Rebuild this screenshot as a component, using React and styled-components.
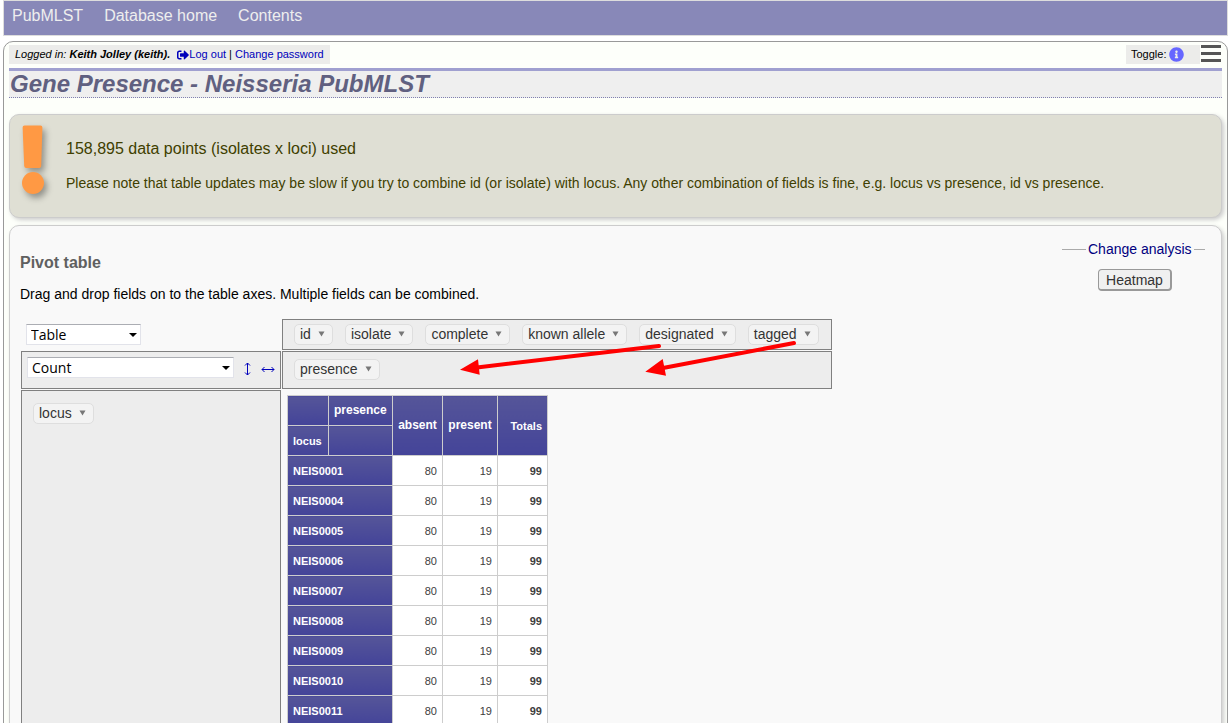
import React from "react";
import styled, { createGlobalStyle } from "styled-components";
import { FaSignOutAlt, FaInfoCircle } from "react-icons/fa";

const GlobalStyle = createGlobalStyle`
  * { box-sizing: border-box; }
  body {
    margin: 0;
    background: #fff;
    color: #000;
    font: 14px/20px "Liberation Sans", Arial, sans-serif;
  }
  a { color: #0000bb; text-decoration: none; }
`;

const Page = styled.div`
  height: 100vh;
  overflow: hidden;
  padding: 0 3px;
`;

const Nav = styled.nav`
  display: flex;
  gap: 21px;
  padding: 5px 8px 9px;
  border: 1px solid #ddd;
  background: #8888b8;
  font-size: 16px;
`;

const NavLink = styled.a`
  color: #eee;
`;

const Main = styled.main`
  margin-top: 5px;
  padding: 3px 5px;
  border: 1px solid #999;
  border-radius: 10px;
  background: #fdfffa;
`;

const TopRow = styled.div`
  display: flex;
  justify-content: space-between;
  align-items: flex-start;
  margin-bottom: 4px;
`;

const Tag = styled.div`
  display: flex;
  align-items: center;
  height: 19px;
  padding: 0 6px;
  background: #ececea;
  font-size: 11px;
  line-height: 19px;
  white-space: pre;
`;

const LogoutLink = styled.a`
  display: flex;
  align-items: center;
  margin-left: 4px;
`;

const ToggleGroup = styled.div`
  display: flex;
  gap: 1px;
`;

const ToggleTag = styled(Tag)`
  width: 74px;
  gap: 3px;
  padding: 0 5px;
`;

const IconButton = styled.button`
  display: flex;
  padding: 0;
  border: 0;
  background: none;
  color: #6666ff;
  font-size: 15px;
`;

const MenuButton = styled(IconButton)`
  flex-direction: column;
  gap: 4px;
  width: 21px;
`;

const MenuBar = styled.span`
  width: 20px;
  height: 3px;
  background: #555;
`;

const Title = styled.h1`
  margin: 0;
  padding-left: 1px;
  border-top: 3px solid #a0a0d0;
  border-bottom: 1px dotted #8080b0;
  background: #efefef;
  color: #606080;
  font-size: 24px;
  font-style: italic;
  line-height: 26px;
`;

const Box = styled.section`
  border: 1px solid #ccc;
  border-radius: 10px;
  box-shadow: 2px 2px 4px #ccc;
`;

const Notice = styled(Box)`
  display: flex;
  gap: 19px;
  min-height: 104px;
  margin-top: 16px;
  padding: 10px 11px;
  background: #dfdfd4;
  color: #404000;
`;

const WarningMark = styled.svg`
  flex: none;
  width: 26px;
  height: 74px;
  overflow: visible;
  filter: drop-shadow(3px 4px 3px rgba(0, 0, 0, 0.35));
`;

const NoticeHeading = styled.h2`
  margin: 14px 0;
  font-size: 16px;
  font-weight: normal;
`;

const Paragraph = styled.p`
  margin: 0;
`;

const Analysis = styled(Box)`
  margin-top: 7px;
  padding: 13px 16px 10px 10px;
  background: #f9f9f9;
`;

const AnalysisHead = styled.div`
  display: flex;
  justify-content: space-between;
  align-items: flex-start;
  margin-bottom: 15px;
`;

const AnalysisIntro = styled.div`
  padding-top: 14px;
`;

const SectionHeading = styled.h2`
  margin: 0 0 11px;
  color: #606060;
  font-size: 16px;
`;

const ChangeAnalysis = styled.fieldset`
  width: 143px;
  margin: 0;
  padding: 10px 0 0 3px;
  border: 0;
  border-top: 1px solid #aaa;
`;

const Legend = styled.legend`
  margin-left: 21px;
  padding: 0 2px;
  color: #000080;
`;

const HeatmapButton = styled.button`
  display: block;
  height: 22px;
  margin: 0 auto;
  padding: 0 7px;
  border: 1px solid #999;
  border-width: 1px 2px 2px 1px;
  border-radius: 4px;
  background: #f0f0f0;
  color: #333;
  font: inherit;
  line-height: 18px;
`;

const Pivot = styled.div`
  position: relative;
  display: grid;
  grid-template-columns: 260px 550px;
  grid-template-rows: 31px 38px auto;
  gap: 1px;
  width: max-content;
  margin-left: 1px;
`;

const PlainCell = styled.div`
  padding: 5px;
`;

const AxisCell = styled.div`
  display: flex;
  align-items: flex-start;
  gap: 12px;
  padding: ${(p) => p.$pad}px 11px 0;
  border: 1px solid #808080;
  background: #ededed;
`;

const AggregatorCell = styled(AxisCell)`
  gap: 10px;
  padding-left: 5px;
  padding-right: 5px;
`;

const SelectWrap = styled.div`
  position: relative;
  width: ${(p) => p.$width}px;
`;

const Select = styled.select`
  display: block;
  appearance: none;
  width: 100%;
  height: 21px;
  padding: 0 4px;
  border: 1px solid #e2e3ea;
  border-top-color: #abadb3;
  border-radius: 0;
  background: #fff;
  color: #000;
  font: 14px/19px "Open Sans", "Noto Sans", sans-serif;
`;

const SelectArrow = styled.svg`
  position: absolute;
  top: 9px;
  right: 4px;
  width: 8px;
  height: 4px;
  pointer-events: none;
`;

const OrderLink = styled.a`
  display: flex;
  align-items: center;
  height: 24px;
`;

const Chip = styled.span`
  display: flex;
  align-items: center;
  gap: 7px;
  height: 21px;
  padding: 0 7px 2px 5px;
  border: 1px solid #dedede;
  border-radius: 5px;
  background: #f3f3f3;
  color: #333;
  white-space: nowrap;
`;

const ChipButton = styled.button`
  display: flex;
  padding: 0;
  border: 0;
  background: none;
`;

const Results = styled.table`
  width: 261px;
  table-layout: fixed;
  border-collapse: collapse;
  font-size: 11px;
  line-height: 13px;
`;

const HeadCell = styled.th`
  height: 30px;
  padding: ${(p) => (p.$row ? "2px 5px 0" : "0 5px")};
  border: 1px solid #cdcdcd;
  background: linear-gradient(#555599, #444499);
  color: #fff;
  font-size: ${(p) => (p.$row ? 11 : 12)}px;
  text-align: ${(p) => p.$align || "left"};
`;

const DataCell = styled.td`
  padding: 2px 5px 0;
  border: 1px solid #cdcdcd;
  background: #fff;
  color: #3d3d3d;
  font-weight: ${(p) => (p.$total ? "bold" : "normal")};
  text-align: right;
`;

const DragArrows = styled.svg`
  position: absolute;
  top: 0;
  left: 0;
  width: 811px;
  height: 80px;
  pointer-events: none;
`;

const unusedFields = ["id", "isolate", "complete", "known allele", "designated", "tagged"];
const loci = ["0001", "0004", "0005", "0006", "0007", "0008", "0009", "0010", "0011"];
const columnWidths = [41, 64, 50, 55, 50];

function Field({ name }) {
  return (
    <Chip draggable>
      {name}
      <ChipButton aria-label={`Filter ${name}`}>
        <svg width="7" height="6" viewBox="0 0 7 6">
          <path d="M0.5 0.5h6L3.5 5.5z" fill="#777" />
        </svg>
      </ChipButton>
    </Chip>
  );
}

function Dropdown({ label, width, value }) {
  return (
    <SelectWrap $width={width}>
      <Select aria-label={label} defaultValue={value}>
        <option>{value}</option>
      </Select>
      <SelectArrow viewBox="0 0 8 4">
        <path d="M0 0h8L4 4z" />
      </SelectArrow>
    </SelectWrap>
  );
}

export default function App() {
  return (
    <>
      <GlobalStyle />
      <Page>
        <Nav>
          <NavLink href="#pubmlst">PubMLST</NavLink>
          <NavLink href="#database">Database home</NavLink>
          <NavLink href="#contents">Contents</NavLink>
        </Nav>
        <Main>
          <TopRow>
            <Tag>
              <i>Logged in: <b>Keith Jolley (keith).</b> </i>
              <LogoutLink href="#logout"><FaSignOutAlt size={12} />Log out</LogoutLink>
              {" | "}
              <a href="#password">Change password</a>
            </Tag>
            <ToggleGroup>
              <ToggleTag>
                Toggle:
                <IconButton aria-label="Toggle information"><FaInfoCircle /></IconButton>
              </ToggleTag>
              <MenuButton aria-label="Menu">
                <MenuBar /><MenuBar /><MenuBar />
              </MenuButton>
            </ToggleGroup>
          </TopRow>
          <Title>Gene Presence - Neisseria PubMLST</Title>

          <Notice>
            <WarningMark viewBox="0 0 26 74">
              <path
                d="M3.5 0.5h16q2 0 1.9 2L20.2 41q-.1 2-2 2H5.2q-1.900 0-2-2L1.600 2.500q-.1-2 1.900-2z"
                fill="#ff9944"
              />
              <circle cx="12" cy="58" r="11" fill="#ff9944" />
            </WarningMark>
            <div>
              <NoticeHeading>158,895 data points (isolates x loci) used</NoticeHeading>
              <Paragraph>
                Please note that table updates may be slow if you try to combine id (or isolate) with
                locus. Any other combination of fields is fine, e.g. locus vs presence, id vs presence.
              </Paragraph>
            </div>
          </Notice>

          <Analysis>
            <AnalysisHead>
              <AnalysisIntro>
                <SectionHeading>Pivot table</SectionHeading>
                <Paragraph>
                  Drag and drop fields on to the table axes. Multiple fields can be combined.
                </Paragraph>
              </AnalysisIntro>
              <ChangeAnalysis>
                <Legend>Change analysis</Legend>
                <HeatmapButton>Heatmap</HeatmapButton>
              </ChangeAnalysis>
            </AnalysisHead>

            <Pivot>
              <PlainCell>
                <Dropdown label="Renderer" width={115} value="Table" />
              </PlainCell>
              <AxisCell $pad={4}>
                {unusedFields.map((name) => <Field key={name} name={name} />)}
              </AxisCell>
              <AggregatorCell $pad={5}>
                <Dropdown label="Aggregator" width={208} value="Count" />
                <OrderLink href="#row-order" aria-label="Row order">
                  <svg width="7" height="14" viewBox="0 0 7 14" fill="none" stroke="#0000bb">
                    <path d="M3.5 1v12M1 3.500l2.500-2.500 2.500 2.500M1 10.500l2.500 2.500 2.500-2.500" />
                  </svg>
                </OrderLink>
                <OrderLink href="#column-order" aria-label="Column order">
                  <svg width="14" height="7" viewBox="0 0 14 7" fill="none" stroke="#0000bb">
                    <path d="M1 3.500h12M3.500 1L1 3.500 3.500 6M10.500 1L13 3.500 10.500 6" />
                  </svg>
                </OrderLink>
              </AggregatorCell>
              <AxisCell $pad={7}>
                <Field name="presence" />
              </AxisCell>
              <AxisCell $pad={12}>
                <Field name="locus" />
              </AxisCell>
              <PlainCell>
                <Results>
                  <colgroup>
                    {columnWidths.map((width, i) => <col key={i} width={width} />)}
                  </colgroup>
                  <thead>
                    <tr>
                      <HeadCell />
                      <HeadCell>presence</HeadCell>
                      <HeadCell rowSpan={2} $align="center">absent</HeadCell>
                      <HeadCell rowSpan={2} $align="center">present</HeadCell>
                      <HeadCell rowSpan={2} $row $align="right">Totals</HeadCell>
                    </tr>
                    <tr>
                      <HeadCell $row>locus</HeadCell>
                      <HeadCell />
                    </tr>
                  </thead>
                  <tbody>
                    {loci.map((id) => (
                      <tr key={id}>
                        <HeadCell colSpan={2} $row scope="row">NEIS{id}</HeadCell>
                        <DataCell>80</DataCell>
                        <DataCell>19</DataCell>
                        <DataCell $total>99</DataCell>
                      </tr>
                    ))}
                  </tbody>
                </Results>
              </PlainCell>
              <DragArrows viewBox="0 0 811 80" fill="#f00" stroke="#f00">
                <path d="M638 27L456 48.500M773 24L642 49" strokeWidth="4" strokeLinecap="round" />
                <path d="M439 50.700L457 40.300 458.700 55.700zM624.300 52.700L641.700 40 645 56.700z" stroke="none" />
              </DragArrows>
            </Pivot>
          </Analysis>
        </Main>
      </Page>
    </>
  );
}
